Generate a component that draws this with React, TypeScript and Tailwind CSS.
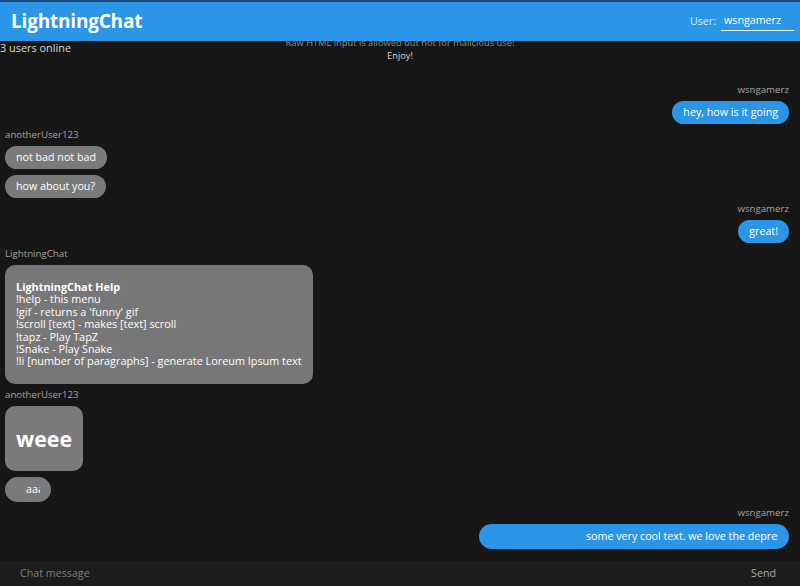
import React from 'react';

type Msg = {
  user: string;
  mine: boolean;
  items: React.ReactNode[];
};

const helpLines = [
  '!help - this menu',
  "!gif - returns a 'funny' gif",
  '!scroll [text] - makes [text] scroll',
  '!tapz - Play TapZ',
  '!Snake - Play Snake',
  '!li [number of paragraphs] - generate Loreum Ipsum text',
];

const Bubble: React.FC<{ mine: boolean; children: React.ReactNode }> = ({ mine, children }) => (
  <div
    className={`rounded-full px-[11px] py-[5px] leading-[13px] text-[10.7px] text-white ${
      mine ? 'bg-[#2b96e8]' : 'bg-[#7a7a7a]'
    }`}
  >
    {children}
  </div>
);

const App: React.FC = () => {
  const messages: Msg[] = [
    { user: 'wsngamerz', mine: true, items: [<Bubble mine>hey, how is it going</Bubble>] },
    {
      user: 'anotherUser123',
      mine: false,
      items: [<Bubble mine={false}>not bad not bad</Bubble>, <Bubble mine={false}>how about you?</Bubble>],
    },
    { user: 'wsngamerz', mine: true, items: [<Bubble mine>great!</Bubble>] },
    {
      user: 'LightningChat',
      mine: false,
      items: [
        <div className="rounded-[10px] bg-[#777777] px-[11px] pt-[16px] pb-[16px] text-[10.85px] leading-[12.4px] text-white">
          <div className="font-bold">LightningChat Help</div>
          {helpLines.map((l, i) => (
            <div key={i}>{l}</div>
          ))}
        </div>,
      ],
    },
    {
      user: 'anotherUser123',
      mine: false,
      items: [
        <div className="rounded-[10px] bg-[#7a7a7a] px-[11px] py-[18px] text-[21.3px] font-bold leading-[29px] text-white">
          weee
        </div>,
        <div className="rounded-full bg-[#7a7a7a] px-[11px] py-[5px] text-[10.7px] leading-[15px] text-white">
          <div className="w-[24px] overflow-hidden whitespace-nowrap pl-[10px]">aaa</div>
        </div>,
      ],
    },
    {
      user: 'wsngamerz',
      mine: true,
      items: [
        <div className="rounded-full bg-[#2b96e8] px-[11px] py-[5px] text-[10.7px] leading-[15px] text-white">
          <div className="w-[288px] overflow-hidden whitespace-nowrap pl-[96px]">
            some very cool text. we love the depression
          </div>
        </div>,
      ],
    },
  ];

  return (
    <div
      className="flex h-[586px] w-[800px] flex-col overflow-hidden bg-[#161616] text-white"
      style={{ fontFamily: '"Open Sans", "Noto Sans", sans-serif' }}
    >
      {/* Header */}
      <header className="relative z-10 flex h-[41px] shrink-0 items-center justify-between border-t-2 border-[#1d4c7a] bg-[#2b96e8] pl-[11px] pr-[6px]">
        <h1 className="text-[19px] font-bold leading-none tracking-[-0.2px]">LightningChat</h1>
        <div className="flex items-center text-[10.7px]">
          <span className="mr-[5px] text-[#dcefff]">User:</span>
          <input
            className="w-[73px] border-b border-[#e6f3ff] bg-transparent pb-[1px] pl-[3px] text-white outline-none"
            defaultValue="wsngamerz"
          />
        </div>
      </header>

      {/* Chat */}
      <main className="flex-1 overflow-hidden">
        <div className="grid grid-cols-[1fr_auto_1fr]">
          <div className="text-[10.9px] leading-[13px] text-[#dadada]">3 users online</div>
          <div className="-mt-[5px] text-center text-[9.3px] leading-[13px]">
            <div className="text-[#8c8c8c]">Raw HTML input is allowed but not for malicious use!</div>
            <div className="text-[#d4d4d4]">Enjoy!</div>
          </div>
          <div />
        </div>

        <div className="mt-[22px] flex flex-col gap-[5px] pl-[5px] pr-[11px]">
          {messages.map((m, i) => (
            <div key={i} className={`flex flex-col ${m.mine ? 'items-end' : 'items-start'}`}>
              <div className="mb-[5px] text-[9.7px] leading-[12px] text-[#a3a3a3]">{m.user}</div>
              <div className={`flex flex-col gap-[6px] ${m.mine ? 'items-end' : 'items-start'}`}>
                {m.items.map((it, j) => (
                  <React.Fragment key={j}>{it}</React.Fragment>
                ))}
              </div>
            </div>
          ))}
        </div>
      </main>

      {/* Input */}
      <form className="flex h-[25px] shrink-0 items-center bg-[#1c1c1c] pl-[20px] pr-[24px]" onSubmit={e => e.preventDefault()}>
        <input
          className="flex-1 bg-transparent text-[10.7px] text-white outline-none placeholder:text-[#7c7c7c]"
          placeholder="Chat message"
        />
        <button type="submit" className="text-[10.7px] text-[#a8a8a8]">
          Send
        </button>
      </form>
    </div>
  );
};

export default App;
